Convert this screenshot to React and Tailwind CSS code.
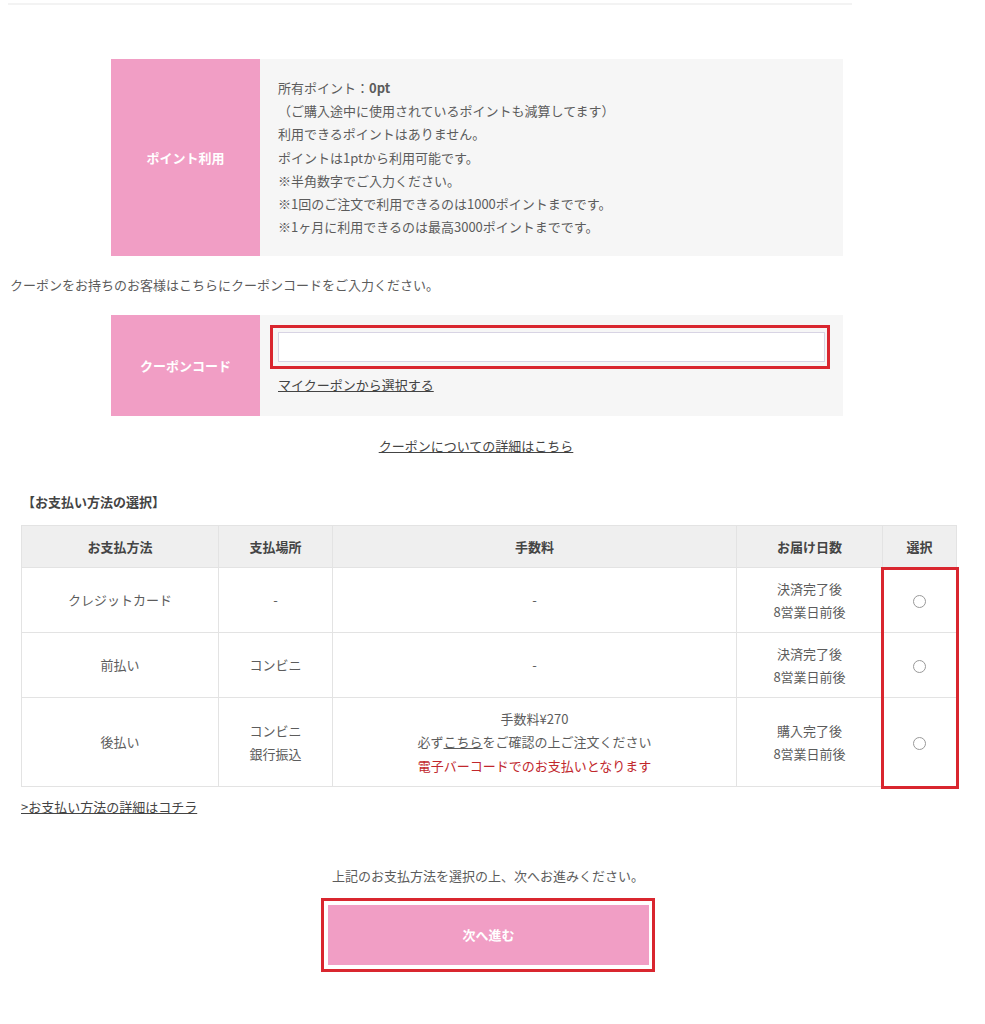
import React from "react";

const PINK = "bg-[#f19ec5]";

function Radio() {
  return (
    <span className="inline-block w-[13px] h-[13px] rounded-full border border-[#999] bg-white align-middle" />
  );
}

const rows = [
  {
    method: "クレジットカード",
    place: ["-"],
    fee: <div>-</div>,
    days: ["決済完了後", "8営業日前後"],
    h: "h-[65px]",
  },
  {
    method: "前払い",
    place: ["コンビニ"],
    fee: <div>-</div>,
    days: ["決済完了後", "8営業日前後"],
    h: "h-[65px]",
  },
  {
    method: "後払い",
    place: ["コンビニ", "銀行振込"],
    fee: (
      <>
        <div>手数料¥270</div>
        <div>
          必ず<span className="underline">こちら</span>をご確認の上ご注文ください
        </div>
        <div className="text-[#c1272d]">電子バーコードでのお支払いとなります</div>
      </>
    ),
    days: ["購入完了後", "8営業日前後"],
    h: "h-[89px]",
  },
];

export default function App() {
  return (
    <div
      className="w-[985px] min-h-[1024px] bg-white text-[13px] text-[#5c5c5c] pb-[52px]"
      style={{ fontFamily: '"Noto Sans CJK JP", "Noto Sans", sans-serif' }}
    >
      {/* top rule */}
      <div className="pt-[3px]">
        <div className="ml-[8px] w-[844px] h-[2px] bg-[#f3f3f3]" />
      </div>

      {/* point box */}
      <div className="mt-[54px] ml-[111px] w-[732px] h-[197px] flex">
        <div className={`w-[149px] ${PINK} flex items-center justify-center text-white font-bold`}>
          ポイント利用
        </div>
        <div className="flex-1 bg-[#f6f6f6] pl-[18px] pt-[17px] leading-[23.2px]">
          <div>
            所有ポイント：<span className="font-bold">0pt</span>
          </div>
          <div>（ご購入途中に使用されているポイントも減算してます）</div>
          <div>利用できるポイントはありません。</div>
          <div>ポイントは1ptから利用可能です。</div>
          <div>※半角数字でご入力ください。</div>
          <div>※1回のご注文で利用できるのは1000ポイントまでです。</div>
          <div>※1ヶ月に利用できるのは最高3000ポイントまでです。</div>
        </div>
      </div>

      <div className="mt-[19px] ml-[10px] leading-[20px]">
        クーポンをお持ちのお客様はこちらにクーポンコードをご入力ください。
      </div>

      {/* coupon box */}
      <div className="mt-[20px] ml-[111px] w-[732px] h-[101px] flex">
        <div className={`w-[149px] ${PINK} flex items-center justify-center text-white font-bold`}>
          クーポンコード
        </div>
        <div className="flex-1 bg-[#f6f6f6] pl-[10px] pt-[10px]">
          <div className="w-[560px] h-[44px] border-[3px] border-[#d9262f] pl-[5px] pr-[2px] pt-[4px]">
            <div className="w-full h-[30px] bg-white border border-[#d8d4e4]" />
          </div>
          <div className="mt-[6px] ml-[8px] leading-[20px] underline text-[#444]">
            マイクーポンから選択する
          </div>
        </div>
      </div>

      <div className="mt-[20px] w-[952px] text-center leading-[20px] underline text-[#444]">
        クーポンについての詳細はこちら
      </div>

      <div className="mt-[36px] ml-[22px] font-bold text-[#444] leading-[20px]">
        【お支払い方法の選択】
      </div>

      {/* payment table */}
      <div className="relative mt-[13px] ml-[21px] w-[935px]">
        <table className="w-[935px] border-collapse table-fixed text-center">
          <colgroup>
            <col className="w-[197px]" />
            <col className="w-[114px]" />
            <col className="w-[404px]" />
            <col className="w-[146px]" />
            <col className="w-[74px]" />
          </colgroup>
          <thead>
            <tr className="h-[42px] bg-[#efefef] text-[#444] font-bold">
              <th className="border border-[#e3e3e3]">お支払方法</th>
              <th className="border border-[#e3e3e3]">支払場所</th>
              <th className="border border-[#e3e3e3]">手数料</th>
              <th className="border border-[#e3e3e3]">お届け日数</th>
              <th className="border border-[#e3e3e3]">選択</th>
            </tr>
          </thead>
          <tbody className="leading-[23.5px]">
            {rows.map((r) => (
              <tr key={r.method} className={r.h}>
                <td className="border border-[#e3e3e3]">{r.method}</td>
                <td className="border border-[#e3e3e3]">
                  {r.place.map((p) => (
                    <div key={p}>{p}</div>
                  ))}
                </td>
                <td className="border border-[#e3e3e3]">{r.fee}</td>
                <td className="border border-[#e3e3e3]">
                  {r.days.map((d) => (
                    <div key={d}>{d}</div>
                  ))}
                </td>
                <td className="border border-[#e3e3e3]">
                  <Radio />
                </td>
              </tr>
            ))}
          </tbody>
        </table>
        <div className="absolute left-[860px] top-[42px] w-[78px] h-[222px] border-[3px] border-[#d9262f] pointer-events-none" />
      </div>

      <div className="mt-[10px] ml-[21px] leading-[20px] underline text-[#444]">
        &gt;お支払い方法の詳細はコチラ
      </div>

      <div className="mt-[49px] w-[976px] text-center leading-[20px]">
        上記のお支払方法を選択の上、次へお進みください。
      </div>

      <div className="mt-[12px] w-[976px] flex justify-center">
        <div className="w-[334px] h-[74px] border-[3px] border-[#d9262f] p-[4px] pr-[3px]">
          <div className={`w-full h-full ${PINK} flex items-center justify-center text-white font-bold`}>
            次へ進む
          </div>
        </div>
      </div>
    </div>
  );
}
